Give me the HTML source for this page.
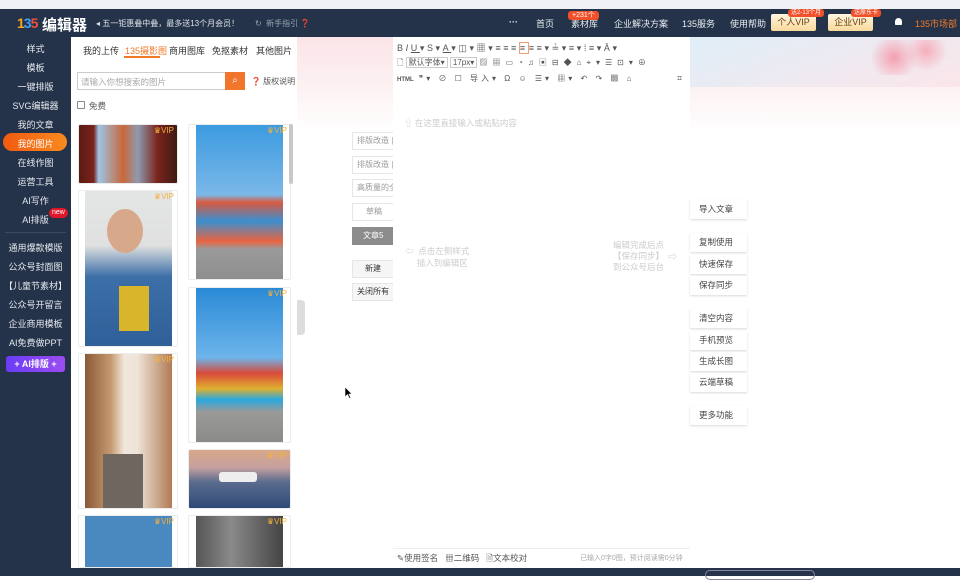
<!DOCTYPE html>
<html><head><meta charset="utf-8"><style>
*{margin:0;padding:0;box-sizing:border-box}
body{width:960px;height:576px;overflow:hidden;position:relative;font-family:"Liberation Sans","Noto Sans CJK SC",sans-serif;font-size:9px;color:#333;background:#fff}
.a{position:absolute}
.top{left:0;top:0;width:960px;height:9px;background:#eef0f4}
.hdr{left:0;top:9px;width:960px;height:28px;background:#243349;color:#fff}
.side{left:0;top:37px;width:71px;height:531px;background:#243349}
.si{position:absolute;left:0;width:71px;text-align:center;color:#e6e9ef;font-size:9px}
.foot{left:0;top:568px;width:960px;height:8px;background:#243349}
.card{position:absolute;background:#fff;border:1px solid #ececec;border-radius:2px;overflow:hidden}
.img{position:absolute}
.vip{position:absolute;right:3px;top:1px;color:#f5b13c;font-size:8px}
.tb{position:absolute;color:#555;font-size:9px;white-space:nowrap}
.ab{position:absolute;left:352px;width:41px;height:18px;border:1px solid #e6e6e6;border-right:none;background:#fff;color:#999;font-size:8px;line-height:16px;padding-left:4px;white-space:nowrap;overflow:hidden}
.rb{position:absolute;left:690px;width:57px;height:19px;background:#fff;box-shadow:0 1px 2px rgba(0,0,0,.15);font-size:8.5px;color:#444;line-height:19px;padding-left:9px}
.nav{position:absolute;top:17px;color:#e8ebf0;font-size:9px}
</style></head><body>
<div class="a top"></div>
<div class="a hdr">
 <div class="a" style="left:17px;top:6px;font-size:14px;font-weight:bold;color:#f5a623;letter-spacing:-1px">1<span style="color:#3aa0ff">3</span><span style="color:#f0503c">5</span></div>
 <div class="a" style="left:42px;top:5px;font-size:15px;font-weight:bold;color:#fff">编辑器</div>
 <div class="a" style="left:96px;top:9px;font-size:8px;color:#dfe3ea">◂ 五一钜惠叠中叠，最多送13个月会员！</div>
 <div class="a" style="left:255px;top:9px;font-size:8px;color:#9aa3b2">↻ &nbsp;新手指引 ❓</div>
</div>
<div class="nav" style="left:509px;font-weight:bold">···</div>
<div class="nav" style="left:536px">首页</div>
<div class="nav" style="left:571px">素材库</div>
<div class="a" style="left:568px;top:11px;background:#f0502a;color:#fff;font-size:7px;padding:0 4px;border-radius:3px;height:9px;line-height:9px">+231个</div>
<div class="nav" style="left:614px">企业解决方案</div>
<div class="nav" style="left:682px">135服务</div>
<div class="nav" style="left:730px">使用帮助</div>
<div class="a" style="left:771px;top:14px;width:45px;height:17px;background:linear-gradient(#fff6e0,#f8d99b);border-radius:2px;color:#6b3c10;font-size:9px;text-align:center;line-height:17px">个人VIP</div>
<div class="a" style="left:788px;top:9px;background:#f0502a;color:#fff;font-size:6px;padding:0 3px;border-radius:3px;height:8px;line-height:8px">送2-13个月</div>
<div class="a" style="left:828px;top:14px;width:45px;height:17px;background:linear-gradient(#fff6e0,#f8d99b);border-radius:2px;color:#6b3c10;font-size:9px;text-align:center;line-height:17px">企业VIP</div>
<div class="a" style="left:851px;top:9px;background:#f0502a;color:#fff;font-size:6px;padding:0 3px;border-radius:3px;height:8px;line-height:8px">送原东卡</div>
<div class="a" style="left:895px;top:18px;width:7px;height:7px;background:#fff;border-radius:4px 4px 1px 1px"></div>
<div class="nav" style="left:915px;color:#f07a2a">135市场部</div>

<div class="a side">
 <div class="si" style="top:5px">样式</div>
 <div class="si" style="top:24px">模板</div>
 <div class="si" style="top:43px">一键排版</div>
 <div class="si" style="top:62px">SVG编辑器</div>
 <div class="si" style="top:81px">我的文章</div>
 <div class="a" style="left:3px;top:96px;width:64px;height:18px;border-radius:9px;background:linear-gradient(90deg,#f25a10,#f98a20)"></div>
 <div class="si" style="top:100px;color:#fff">我的图片</div>
 <div class="si" style="top:119px">在线作图</div>
 <div class="si" style="top:138px">运营工具</div>
 <div class="si" style="top:157px">AI写作</div>
 <div class="si" style="top:176px">AI排版</div>
 <div class="a" style="left:49px;top:171px;background:#e0162b;color:#fff;font-size:7px;padding:0 3px;border-radius:5px;height:10px;line-height:10px">new</div>
 <div class="a" style="left:5px;top:195px;width:61px;height:1px;background:#3c4a60"></div>
 <div class="si" style="top:204px">通用爆款模版</div>
 <div class="si" style="top:223px">公众号封面图</div>
 <div class="si" style="top:242px">【儿童节素材】</div>
 <div class="si" style="top:261px">公众号开留言</div>
 <div class="si" style="top:280px">企业商用模板</div>
 <div class="si" style="top:299px">AI免费做PPT</div>
 <div class="a" style="left:6px;top:319px;width:59px;height:16px;border-radius:3px;background:linear-gradient(90deg,#6a3cf5,#9b4df0);color:#fff;font-weight:bold;font-size:9px;text-align:center;line-height:16px">+ AI排版 +</div>
</div>

<!-- left panel -->
<div class="a" style="left:71px;top:37px;width:226px;height:531px;background:#fff"></div>
<div class="tb" style="left:83px;top:44px;color:#333">我的上传</div>
<div class="tb" style="left:125px;top:44px;color:#f07a2a">135摄影图</div>
<div class="a" style="left:124px;top:56px;width:36px;height:1.5px;background:#f07a2a"></div>
<div class="tb" style="left:169px;top:44px;color:#333">商用图库</div>
<div class="tb" style="left:212px;top:44px;color:#333">免抠素材</div>
<div class="tb" style="left:256px;top:44px;color:#333">其他图片</div>
<div class="a" style="left:77px;top:72px;width:149px;height:18px;border:1px solid #ccc;color:#aaa;font-size:8.5px;padding:3px 3px">请输入你想搜索的图片</div>
<div class="a" style="left:225px;top:72px;width:20px;height:18px;background:#f2752e;color:#fff;text-align:center;line-height:18px;font-size:10px">⌕</div>
<div class="tb" style="left:251px;top:76px;font-size:8px">❓ 版权说明</div>
<div class="a" style="left:77px;top:101px;width:8px;height:8px;border:1px solid #888;border-radius:1px"></div>
<div class="tb" style="left:89px;top:100px;font-size:8.5px">免费</div>

<div class="card" style="left:78px;top:124px;width:100px;height:60px"><div class="img" style="left:0;top:0;width:100%;height:100%;background:linear-gradient(90deg,#5a1a14 0,#7a241c 15%,#9cc4e6 20%,#c9673a 45%,#8f9ab0 60%,#7a241c 80%,#3e1a14)"></div><div class="vip">♛VIP</div></div>
<div class="card" style="left:78px;top:190px;width:100px;height:157px"><div class="img" style="left:6px;top:0;width:87px;height:156px;background:linear-gradient(#e4e6e6 0,#dfe0df 35%,#3c6fa8 55%,#2f5f98 100%)"></div><div class="img" style="left:28px;top:18px;width:36px;height:44px;border-radius:50%;background:#d8a88a"></div><div class="img" style="left:40px;top:95px;width:30px;height:45px;background:#d8b52a"></div><div class="vip">♛VIP</div></div>
<div class="card" style="left:78px;top:353px;width:100px;height:156px"><div class="img" style="left:6px;top:0;width:87px;height:155px;background:linear-gradient(90deg,#8a5a38,#c69a70 30%,#f0e6dc 45%,#efe4d8 60%,#b07b55)"></div><div class="img" style="left:24px;top:100px;width:40px;height:55px;background:#6f6660"></div><div class="vip">♛VIP</div></div>
<div class="card" style="left:78px;top:515px;width:100px;height:53px"><div class="img" style="left:6px;top:0;width:87px;height:53px;background:#4a88c0"></div><div class="vip">♛VIP</div></div>

<div class="card" style="left:188px;top:124px;width:103px;height:156px"><div class="img" style="left:7px;top:0;width:87px;height:155px;background:linear-gradient(#3c9be0 0,#7ab8e8 45%,#d85a40 50%,#3a8fd0 62%,#e86440 75%,#9a9a9a 80%,#8e8e8e)"></div><div class="vip">♛VIP</div></div>
<div class="card" style="left:188px;top:287px;width:103px;height:156px"><div class="img" style="left:7px;top:0;width:87px;height:155px;background:linear-gradient(#2a8ad6 0,#6db4ea 45%,#d84a3a 55%,#e0b030 65%,#2aa8e0 72%,#9a9a98 80%,#8a8a88)"></div><div class="vip">♛VIP</div></div>
<div class="card" style="left:188px;top:449px;width:103px;height:60px"><div class="img" style="left:0;top:0;width:100%;height:100%;background:linear-gradient(#d8a888 0,#c6a0a0 30%,#5a6c8e 55%,#2f4a78)"></div><div class="img" style="left:30px;top:22px;width:38px;height:10px;background:#eee;border-radius:3px"></div><div class="vip">♛VIP</div></div>
<div class="card" style="left:188px;top:515px;width:103px;height:53px"><div class="img" style="left:7px;top:0;width:87px;height:53px;background:linear-gradient(90deg,#555,#8a8a8a 40%,#444)"></div><div class="vip">♛VIP</div></div>
<div class="a" style="left:289px;top:124px;width:4px;height:60px;background:#c8c8c8;border-radius:2px"></div>

<!-- right background -->
<div class="a" style="left:297px;top:37px;width:663px;height:531px;background:linear-gradient(#fbe4e8 0,#fdf2f3 10%,#fff 18%)"></div>
<div class="a" style="left:690px;top:37px;width:270px;height:50px;background:linear-gradient(160deg,#dfeef8,#fbe6ea)"></div>
<div class="a" style="left:870px;top:40px;width:80px;height:35px;background:radial-gradient(circle at 30% 50%,#f4a0b0 0,transparent 40%),radial-gradient(circle at 70% 30%,#f6aebc 0,transparent 35%)"></div>
<div class="a" style="left:297px;top:300px;width:8px;height:35px;background:#ddd;border-radius:0 4px 4px 0"></div>

<!-- editor -->
<div class="a" style="left:393px;top:37px;width:297px;height:531px;background:#fff"></div>
<div class="tb" style="left:397px;top:41px;letter-spacing:2.6px;font-size:9px;color:#555">B<i>I</i><u>U</u>▾S▾<u>A</u>▾◫▾▦▾≡≡≡<span style="border:1px solid #f0a070">≡</span>≡≡▾≟▾≡▾⁞≡▾Ā▾</div>
<div class="tb" style="left:397px;top:57px;font-size:8px;color:#555">🗋 <span style="border:1px solid #ccc;padding:0 2px">默认字体▾</span> <span style="border:1px solid #ccc;padding:0 2px">17px▾</span> <span style="letter-spacing:5px">▨▦▭◔♫▣⊟◆⌂⌖▾☰⊡▾⊕</span></div>
<div class="tb" style="left:397px;top:73px;font-size:8px;color:#555;letter-spacing:3px"><b style="font-size:6px;letter-spacing:0">HTML</b> ❞▾ ⊘ ☐ 导入▾ Ω ☺ ☰▾ ▦▾ ↶ ↷ ▩ ⌂</div>
<div class="tb" style="left:677px;top:73px;color:#555">⌗</div>
<div class="tb" style="left:404px;top:117px;color:#ccc;font-size:8.5px">⇧ 在这里直接输入或粘贴内容</div>
<div class="tb" style="left:405px;top:245px;color:#ccc;font-size:8.5px;line-height:12px">⇦ &nbsp;点击左侧样式<br>&nbsp;&nbsp;&nbsp;&nbsp;&nbsp;插入到编辑区</div>
<div class="tb" style="left:613px;top:240px;color:#ccc;font-size:8.5px;line-height:11px">编辑完成后点<br>【保存同步】<br>到公众号后台</div>
<div class="tb" style="left:668px;top:250px;color:#ccc">⇨</div>

<div class="ab" style="top:132px">排版改造 |</div>
<div class="ab" style="top:156px">排版改造 |</div>
<div class="ab" style="top:179px">高质量的全</div>
<div class="ab" style="top:203px;padding-left:13px">草稿</div>
<div class="ab" style="top:227px;background:#8c8c8c;color:#fff;border-color:#8c8c8c;padding-left:10px">文章5</div>
<div class="ab" style="top:260px;background:#f6f6f6;color:#333;padding-left:12px">新建</div>
<div class="ab" style="top:283px;background:#f6f6f6;color:#333;padding-left:4px">关闭所有</div>

<div class="rb" style="top:200px">导入文章</div>
<div class="rb" style="top:233px">复制使用</div>
<div class="rb" style="top:255px">快速保存</div>
<div class="rb" style="top:276px">保存同步</div>
<div class="rb" style="top:309px">清空内容</div>
<div class="rb" style="top:331px">手机预览</div>
<div class="rb" style="top:352px">生成长图</div>
<div class="rb" style="top:373px">云端草稿</div>
<div class="rb" style="top:406px">更多功能</div>

<div class="a" style="left:393px;top:548px;width:297px;height:1px;background:#eee"></div>
<div class="tb" style="left:397px;top:552px;font-size:8.5px">✎使用签名 &nbsp;&nbsp;▦二维码 &nbsp;&nbsp;🗎文本校对</div>
<div class="tb" style="left:580px;top:553px;font-size:7px;color:#aaa">已输入0字0图，预计阅读需0分钟</div>
<div class="a foot"></div>
<div class="a" style="left:705px;top:570px;width:110px;height:10px;border:1px solid #889;border-radius:6px"></div>
<svg class="a" style="left:345px;top:387px" width="8" height="12" viewBox="0 0 8 12"><path d="M0 0 L0 10 L2.5 7.5 L4.5 11.5 L5.8 11 L4 7 L7 7 Z" fill="#000" stroke="#fff" stroke-width="0.6"/></svg>
</body></html>
